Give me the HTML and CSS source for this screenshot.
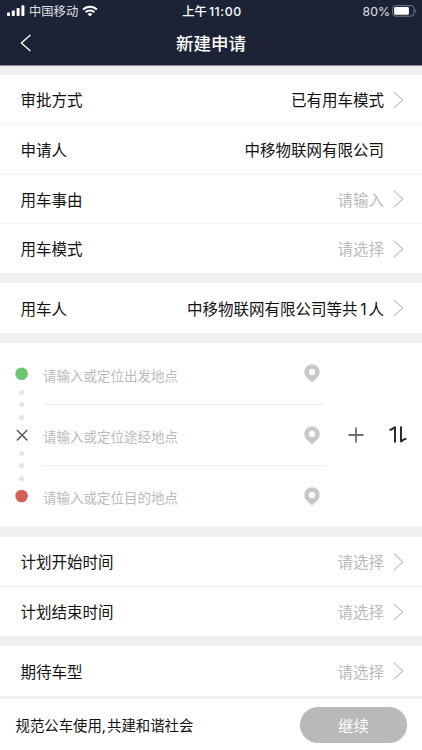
FILE: index.html
```
<!DOCTYPE html>
<html lang="zh-CN">
<head>
    <meta charset="UTF-8">
    <meta name="viewport" content="width=device-width, initial-scale=1.0">
    <title>新建申请</title>
    <link rel="stylesheet" href="styles.css">
</head>
<body>
    <svg class="defs" width="0" height="0">
        <symbol id="chevron" viewBox="0 0 11 18">
            <path d="M0.8 0.7 L9.8 9 L0.8 17.3" fill="none" stroke="#c0c0c0" stroke-width="1.1"/>
        </symbol>
        <symbol id="pin" viewBox="0 0 16 19">
            <path fill="#c8c8c8" fill-rule="evenodd" d="M8 0.2 A7.7 7.7 0 0 0 0.3 7.9 C0.3 10.6 1.6 12.4 3.2 14 L8 18.6 L12.8 14 C14.4 12.4 15.7 10.6 15.7 7.9 A7.7 7.7 0 0 0 8 0.2 Z M8 4.7 A3.2 3.2 0 1 1 8 11.1 A3.2 3.2 0 1 1 8 4.7 Z"/>
        </symbol>
    </svg>

    <div class="header">
        <div class="status-bar">
            <div class="carrier">
                <svg width="18" height="12" viewBox="0 0 18 12" fill="#fff">
                    <rect x="0" y="7.6" width="3" height="3.4" rx="0.8"/>
                    <rect x="4.8" y="5.6" width="3" height="5.4" rx="0.8"/>
                    <rect x="9.6" y="3" width="3" height="8" rx="0.8"/>
                    <rect x="14.4" y="0.2" width="3" height="10.8" rx="0.8"/>
                </svg>
                <span>中国移动</span>
                <svg class="wifi" width="16" height="12" viewBox="0 0 16 12" fill="none" stroke="#fff" stroke-width="2.1">
                    <path d="M1.1 4.6 A9.8 9.8 0 0 1 14.9 4.6"/>
                    <path d="M3.7 7.3 A6.1 6.1 0 0 1 12.3 7.3"/>
                    <path d="M5.7 9.2 A3.3 3.3 0 0 1 10.3 9.2 L8 11.6 Z" fill="#fff" stroke="none"/>
                </svg>
            </div>
            <div class="time">上午<span class="clock">11:00</span></div>
            <div class="battery">
                <span>80%</span>
                <svg width="25" height="12" viewBox="0 0 25 12">
                    <rect x="0.6" y="0.6" width="21.4" height="10.6" rx="3" fill="none" stroke="#777b88" stroke-width="1"/>
                    <rect x="2.1" y="2.1" width="14.8" height="7.6" rx="1.3" fill="#fff"/>
                    <path d="M23.3 4 C24.6 4.6 24.6 7.2 23.3 7.8 Z" fill="#777b88"/>
                </svg>
            </div>
        </div>
        <div class="nav-bar">
            <svg class="back" width="12" height="18" viewBox="0 0 12 18" fill="none" stroke="#fff" stroke-width="1.4">
                <path d="M10.4 1 L1.4 9 L10.4 17"/>
            </svg>
            <h1>新建申请</h1>
        </div>
    </div>

    <div class="content">
        <div class="group">
            <div class="row">
                <span class="label">审批方式</span>
                <span class="value">已有用车模式</span>
                <svg class="arrow"><use href="#chevron"/></svg>
            </div>
            <div class="row">
                <span class="label">申请人</span>
                <span class="value no-arrow">中移物联网有限公司</span>
            </div>
            <div class="row">
                <span class="label">用车事由</span>
                <span class="value placeholder">请输入</span>
                <svg class="arrow"><use href="#chevron"/></svg>
            </div>
            <div class="row">
                <span class="label">用车模式</span>
                <span class="value placeholder">请选择</span>
                <svg class="arrow"><use href="#chevron"/></svg>
            </div>
        </div>

        <div class="group">
            <div class="row">
                <span class="label">用车人</span>
                <span class="value">中移物联网有限公司等共<span class="count">1</span>人</span>
                <svg class="arrow"><use href="#chevron"/></svg>
            </div>
        </div>

        <div class="route">
            <svg class="track" width="14" height="136" viewBox="0 0 14 136">
                <circle cx="6.6" cy="6.8" r="6.3" fill="#6bc771"/>
                <g fill="#e4e4e4">
                    <circle cx="6.7" cy="25.6" r="2.5"/>
                    <circle cx="6.7" cy="37.4" r="2.5"/>
                    <circle cx="6.7" cy="50.6" r="2.5"/>
                    <circle cx="6.7" cy="86.6" r="2.5"/>
                    <circle cx="6.7" cy="98.6" r="2.5"/>
                    <circle cx="6.7" cy="111.7" r="2.5"/>
                </g>
                <path d="M1.9 63 L12.3 73.4 M12.3 63 L1.9 73.4" stroke="#606060" stroke-width="1.5"/>
                <circle cx="6.6" cy="129" r="6.3" fill="#d36256"/>
            </svg>
            <div class="stops">
                <div class="stop">
                    <span>请输入或定位出发地点</span>
                    <svg class="pin"><use href="#pin"/></svg>
                </div>
                <div class="stop">
                    <span>请输入或定位途经地点</span>
                    <svg class="pin"><use href="#pin"/></svg>
                </div>
                <div class="stop">
                    <span>请输入或定位目的地点</span>
                    <svg class="pin"><use href="#pin"/></svg>
                </div>
            </div>
            <div class="route-actions">
                <svg width="16" height="16" viewBox="0 0 16 16" stroke="#707070" stroke-width="1.8">
                    <path d="M8 0.5 V15.5 M0.5 8 H15.5"/>
                </svg>
                <svg width="18" height="17" viewBox="0 0 18 17" fill="none" stroke="#2b2b2b" stroke-width="2" stroke-linejoin="round">
                    <path d="M0.5 4 L3 3.2 L6 1.2 V16.6"/>
                    <path d="M12 0.4 V15.6 L15 13.4 L17.5 12.6"/>
                </svg>
            </div>
        </div>

        <div class="group">
            <div class="row">
                <span class="label">计划开始时间</span>
                <span class="value placeholder">请选择</span>
                <svg class="arrow"><use href="#chevron"/></svg>
            </div>
            <div class="row">
                <span class="label">计划结束时间</span>
                <span class="value placeholder">请选择</span>
                <svg class="arrow"><use href="#chevron"/></svg>
            </div>
        </div>

        <div class="group">
            <div class="row">
                <span class="label">期待车型</span>
                <span class="value placeholder">请选择</span>
                <svg class="arrow"><use href="#chevron"/></svg>
            </div>
        </div>
    </div>

    <div class="footer">
        <span>规范公车使用<span class="comma">,</span>共建和谐社会</span>
        <button class="next-btn">继续</button>
    </div>
</body>
</html>
```
FILE: styles.css
```
* { margin: 0; padding: 0; box-sizing: border-box; }
body {
    font-family: 'Inter', 'Noto Sans CJK SC', sans-serif;
    background: #f0f0f0;
    color: #111;
    width: 422px;
    height: 750px;
    overflow: hidden;
    display: flex;
    flex-direction: column;
}
svg { display: block; flex-shrink: 0; }
.defs { position: absolute; }

/* header */
.header {
    height: 66px;
    background: #1d2336;
    border-bottom: 1px solid #8a8997;
    color: #fff;
}
.status-bar {
    height: 21px;
    padding: 0 5px 0 7px;
    display: grid;
    grid-template-columns: 1fr auto 1fr;
    align-items: center;
    font-size: 12.3px;
    line-height: 20px;
}
.carrier span, .battery span, .time { padding-top: 2px; }
.carrier, .battery {
    display: flex;
    align-items: center;
}
.carrier { gap: 4px; color: #dfe0e5; }
.battery { justify-content: flex-end; gap: 2px; color: #dfe0e5; }
.time { font-weight: 500; }
.clock { margin-left: 2px; letter-spacing: 0.6px; }
.nav-bar {
    height: 44px;
    padding: 0 20px;
    display: grid;
    grid-template-columns: 1fr auto 1fr;
    align-items: center;
}
.nav-bar h1 {
    font-size: 17.5px;
    font-weight: 500;
    line-height: 24px;
    padding-top: 1px;
}

/* form rows */
.content {
    display: flex;
    flex-direction: column;
    gap: 10.6px;
    padding-top: 9px;
}
.group { background: #fff; }
.row {
    height: 49.45px;
    padding: 0 18px 0 21px;
    display: flex;
    align-items: center;
    font-size: 15.5px;
    line-height: 24px;
}
.row + .row { border-top: 1px solid #f2f2f2; }
.label {
    margin-left: -0.6px;
    padding-top: 3px;
}
.value {
    margin-left: auto;
    padding-top: 3px;
}
.no-arrow { margin-right: 20px; }
.placeholder { color: #bbb; }
.count { padding: 0 2px 0 2.6px; }
.arrow {
    width: 11px;
    height: 18px;
    margin-left: 9px;
}

/* route */
.route {
    height: 183px;
    padding: 0 15px;
    display: flex;
    align-items: center;
    background: #fff;
}
.stops {
    width: 284px;
    margin-left: 13px;
}
.stop {
    height: 61px;
    padding: 0 6px 0 1px;
    display: flex;
    align-items: center;
    justify-content: space-between;
    font-size: 13.5px;
    line-height: 20px;
    color: #bbb;
}
.stop span { padding-top: 4px; }
.stop + .stop { border-top: 1px solid #f0f0f0; }
.pin { width: 16px; height: 19px; }
.route-actions {
    margin-left: auto;
    display: flex;
    align-items: center;
    gap: 25px;
}

/* footer */
.footer {
    margin-top: auto;
    height: 51px;
    padding: 0 15px 0 15.5px;
    display: flex;
    align-items: center;
    justify-content: space-between;
    background: #fff;
    font-size: 14.4px;
}
.comma { padding-right: 1px; }
.next-btn {
    width: 107px;
    height: 36px;
    border: none;
    border-radius: 18px;
    background: #b9b9b9;
    color: #fff;
    font-family: inherit;
    font-size: 15.5px;
}
```
